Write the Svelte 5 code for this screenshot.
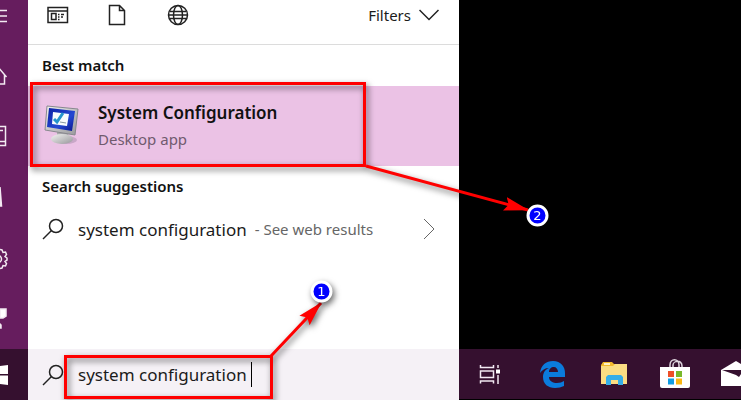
<script lang="ts">
  let query = 'system configuration';
</script>

<div class="screen">
  <nav class="rail" aria-label="Start menu">
    <button class="rail-item" aria-label="Expand">
      <svg viewBox="0 0 28 60"><path d="M0 26.5H7M0 32H7M0 37.5H7" /></svg>
    </button>
    <button class="rail-item" aria-label="Home">
      <svg viewBox="0 0 28 60"><path d="M-2 22L6.5 32M4.5 30V39H0" /></svg>
    </button>
    <button class="rail-item" aria-label="Apps">
      <svg viewBox="0 0 28 60"><path d="M0 20.5H5.5V39.5H0M0 35.5H5M0 24.5H3" /></svg>
    </button>
    <button class="rail-item" aria-label="Documents">
      <svg viewBox="0 0 28 60"><path d="M0 20V39H1.5L0 20M0 36H2" /></svg>
    </button>
    <button class="rail-item" aria-label="Settings">
      <svg viewBox="0 0 28 60">
        <circle cx="-2" cy="31" r="3.5" />
        <path d="M0 21.5L2 22L3 24.5L5.5 24L6.5 26.5L5 28.5L7 30V32L5 33.5L6.5 35.5L5.5 38L3 37.5L2 40L0 40.5" />
      </svg>
    </button>
    <button class="rail-item" aria-label="Feedback">
      <svg viewBox="0 0 28 60"><path class="solid" d="M0 20H6V27L3 29H0ZM0 35L1 36V39H0Z" /></svg>
    </button>
  </nav>

  <main class="panel">
    <header class="toolbar">
      <button class="tool" aria-label="Apps">
        <svg width="22" height="22" viewBox="0 0 22 22">
          <path d="M1 3.5H20.5V18.5H1ZM1 7H20.5M4.5 9.5H9V15.5H4.5ZM11 10.5H12.5M14 10.5H17M11 13H12.5M14 13H16M11 15.5H12.5" />
        </svg>
      </button>
      <button class="tool" aria-label="Documents">
        <svg width="22" height="22" viewBox="0 0 22 22">
          <path d="M2.5 1.5H12.5L17.5 6.5V20.5H2.5ZM12.5 1.5V6.5H17.5" />
        </svg>
      </button>
      <button class="tool" aria-label="Web">
        <svg width="22" height="22" viewBox="0 0 22 22">
          <circle cx="11" cy="11" r="9.5" />
          <ellipse cx="11" cy="11" rx="4.5" ry="9.5" />
          <path d="M1.5 11H20.5M3 7.5H19M3 14.5H19" />
        </svg>
      </button>
      <button class="filters">
        Filters
        <svg width="20" height="12" viewBox="0 0 20 12"><path d="M0.5 1L10 10.5L19.5 1" /></svg>
      </button>
    </header>

    <h2 class="heading">Best match</h2>
    <button class="result">
      <svg class="app-icon" width="38" height="42" viewBox="0 0 38 42">
        <defs>
          <linearGradient id="glass" x1="0" x2="1" y1="0" y2="1">
            <stop offset="0" stop-color="#0c1fa5" />
            <stop offset="0.6" stop-color="#2448d2" />
            <stop offset="1" stop-color="#08138c" />
          </linearGradient>
          <linearGradient id="metal" x1="0" x2="1" y1="0" y2="1">
            <stop offset="0" stop-color="#f4f4f2" />
            <stop offset="1" stop-color="#96969a" />
          </linearGradient>
        </defs>
        <ellipse cx="22" cy="35" rx="11" ry="4" fill="#a68baa" opacity="0.5" />
        <path d="M13 26L24 28L25 34L13 32Z" fill="#a9a9ad" />
        <ellipse cx="18" cy="34" rx="11" ry="5" fill="url(#metal)" />
        <path d="M3 1L34 4L31 30L1 25Z" fill="url(#metal)" stroke="#88888e" />
        <path d="M5 3L31 6L28 26L3 22Z" fill="url(#glass)" />
        <path d="M9 7L25 9L23 21L8 19Z" fill="#f8fbfd" />
        <path d="M10 14L13 17L19 8" fill="none" stroke="#2494cc" stroke-width="3" />
        <path d="M16 17L22 18" stroke="#8898a0" />
      </svg>
      <span class="result-text">
        <strong>System Configuration</strong>
        <span class="kind">Desktop app</span>
      </span>
    </button>

    <h2 class="heading">Search suggestions</h2>
    <button class="suggestion">
      <svg class="lens" width="22" height="22" viewBox="0 0 22 22">
        <circle cx="14" cy="8" r="6.5" /><path d="M9.5 12.5L1 21" />
      </svg>
      <span class="term">system configuration</span>
      <span class="hint">- See web results</span>
      <svg class="next" width="12" height="22" viewBox="0 0 12 22"><path d="M1 1L11 11L1 21" /></svg>
    </button>
  </main>

  <section class="desktop" aria-label="Desktop"></section>

  <button class="start" aria-label="Start">
    <svg width="28" height="22" viewBox="0 0 28 22"><path d="M0 2L8 1V10H0ZM0 11.5H8V21L0 20Z" /></svg>
  </button>

  <label class="search">
    <svg class="lens" width="22" height="22" viewBox="0 0 22 22">
      <circle cx="14" cy="8" r="6.5" /><path d="M9.5 12.5L1 21" />
    </svg>
    <input type="text" aria-label="Search" bind:value={query} />
  </label>

  <nav class="taskbar" aria-label="Taskbar">
    <button class="task task-view" aria-label="Task View">
      <svg width="22" height="22" viewBox="0 0 22 22" fill="none" stroke="#f2e9f2" stroke-width="1.5">
        <path d="M1.5 2V4.5H14.5V2M1.5 8H14.5V14.5H1.5ZM1.5 20.5V18H14.5V20.5M19 2V5M19 12V21" />
        <path d="M17 6.5H21V10.5H17Z" fill="#fff" stroke="none" />
      </svg>
    </button>
    <button class="task" aria-label="Microsoft Edge">
      <svg width="26" height="28" viewBox="0 0 26 28">
        <path fill="#0b7bdc" d="M0 13C1 5 6 1 13 1C21 1 25 7 25 13V17H9C9 21 13 23 17 23C20 23 22 22 24 21V26C21 27 19 28 15 28C8 28 3 24 3 17C3 12 6 9 9 8C5 8 2 10 0 13ZM9 12H18C18 9 16 7 14 7C11 7 9 9 9 12Z" />
      </svg>
    </button>
    <button class="task" aria-label="File Explorer">
      <svg width="28" height="26" viewBox="0 0 28 26">
        <path fill="#f4b92c" d="M1 4L3 1H12L14 3H27V7H1Z" />
        <path fill="#fff2c4" d="M4 2H10V4H4Z" />
        <path fill="#fbdd83" d="M1 5H13L15 3H27V23H1Z" />
        <path fill="#35aee8" d="M8 14H21L23 16V24H18V19H11V24H6V16Z" />
      </svg>
    </button>
    <button class="task" aria-label="Microsoft Store">
      <svg width="30" height="32" viewBox="0 0 30 32">
        <path d="M10 11V7C10 0 19 0 19 7V11M13 11V7C13 3 22 1 22 8V11" fill="none" stroke="#ded5de" stroke-width="1.5" />
        <path d="M0 9H30V28Q30 30 28 30H2Q0 30 0 28Z" fill="#fff" />
        <path fill="#ee4f28" d="M8 13H14V19H8Z" />
        <path fill="#78b82a" d="M16 13H22V19H16Z" />
        <path fill="#109de4" d="M8 20.5H14V26.5H8Z" />
        <path fill="#fbb713" d="M16 20.5H22V26.5H16Z" />
      </svg>
    </button>
    <button class="task" aria-label="Mail">
      <svg width="30" height="26" viewBox="0 0 30 26">
        <path fill="#fff" d="M0 9L15 0L30 9V25H0Z" />
        <path fill="#35102f" d="M1 9H29L20 13L18 16L15 14Z" />
      </svg>
    </button>
  </nav>

  <!-- Step markers drawn over the desktop -->
  <svg class="steps" width="741" height="400" viewBox="0 0 741 400" aria-hidden="true">
    <defs>
      <marker id="head" markerUnits="userSpaceOnUse" markerWidth="26" markerHeight="16" refX="24" refY="8" orient="auto">
        <path d="M0 1L25 8L0 15L4 8Z" fill="#f00" />
      </marker>
    </defs>
    <g class="shadow" fill="none" stroke="#f00" stroke-width="3">
      <rect x="31.5" y="83.5" width="333" height="82" />
      <rect x="65.5" y="356.5" width="206" height="41" />
      <path d="M366 166L528 210" marker-end="url(#head)" />
      <path d="M271 356L321 303" marker-end="url(#head)" />
    </g>
    <g class="badge shadow">
      <circle cx="321.5" cy="291.5" r="9.5" />
      <text x="321.5" y="296">1</text>
    </g>
    <g class="badge shadow">
      <circle cx="537.5" cy="215.5" r="9.5" />
      <text x="537.5" y="220">2</text>
    </g>
  </svg>
</div>

<style>
  :global(body) {
    margin: 0;
    background: #000;
  }

  .screen {
    position: relative;
    display: grid;
    grid-template-columns: 28px minmax(0, 431px) minmax(0, 1fr);
    grid-template-rows: 1fr 51px;
    min-height: 100vh;
    overflow: hidden;
    font-family: 'Noto Sans', 'Open Sans', sans-serif;
    color: #1b1b1b;
  }

  button {
    margin: 0;
    padding: 0;
    border: 0;
    background: none;
    color: inherit;
    font: inherit;
    text-align: left;
  }

  svg {
    display: block;
    flex: none;
  }

  .rail {
    display: flex;
    flex-direction: column;
    justify-content: flex-end;
    height: 100%;
    max-height: 349px;
    overflow: hidden;
    background: #661d5e;
  }

  .rail-item {
    flex: none;
    height: 61px;
  }

  .rail-item svg {
    width: 28px;
    height: 60px;
    fill: none;
    stroke: #f3eaf2;
    stroke-width: 1.5;
  }

  .rail-item .solid {
    fill: #fff;
  }

  .panel {
    background: #fff;
  }

  .toolbar {
    display: flex;
    align-items: flex-start;
    gap: 38px;
    box-sizing: border-box;
    height: 45px;
    padding: 4px 20px 0 19px;
    border-bottom: 1px solid #dcdcdc;
  }

  .toolbar svg {
    fill: none;
    stroke: #222;
    stroke-width: 1.5;
  }

  .filters {
    display: flex;
    align-items: center;
    gap: 8px;
    margin-left: auto;
    font-size: 15px;
    line-height: 22px;
  }

  .heading {
    margin: 0;
    padding: 0 14px;
    font-size: 15px;
    font-weight: 600;
    line-height: 41px;
    color: #111;
  }

  .result {
    display: flex;
    align-items: center;
    gap: 16px;
    width: 100%;
    height: 80px;
    padding: 0 16px;
    background: #ebc2e5;
  }

  .result-text {
    display: flex;
    flex-direction: column;
  }

  strong {
    font-size: 17px;
    font-weight: 600;
    line-height: 26px;
    color: #111;
  }

  .kind {
    font-size: 15px;
    line-height: 26px;
    color: #705a6e;
  }

  .suggestion {
    display: flex;
    align-items: center;
    width: 100%;
    height: 44px;
    padding: 0 24px 0 14px;
  }

  .lens {
    margin-right: 14px;
    fill: none;
    stroke: #222;
    stroke-width: 1.5;
  }

  .term {
    font-size: 17px;
  }

  .hint {
    margin-left: 8px;
    font-size: 15px;
    color: #666;
  }

  .next {
    margin-left: auto;
    fill: none;
    stroke: #666;
  }

  .start {
    background: #35102f;
  }

  .start svg {
    fill: #fff;
  }

  .search {
    display: flex;
    align-items: center;
    padding: 0 14px;
    background: #f5f1f6;
  }

  .search input {
    field-sizing: content;
    height: 25px;
    min-width: 0;
    padding: 0 4px 0 0;
    border: 0;
    border-right: 1px solid #000;
    outline: 0;
    background: none;
    color: #1b1b1b;
    font: inherit;
    font-size: 17px;
  }

  .taskbar {
    display: flex;
    overflow: hidden;
    border-bottom: 1px solid #000;
    background: #35102f;
  }

  .task {
    display: flex;
    flex: none;
    align-items: center;
    justify-content: center;
    width: 61px;
  }

  .task-view {
    margin-right: 2px;
  }

  .steps {
    position: absolute;
    top: 0;
    left: 0;
    pointer-events: none;
  }

  .shadow {
    filter: drop-shadow(2px 3px 3px rgba(0, 0, 0, 0.6));
  }

  .badge circle {
    fill: #00f;
    stroke: #fff;
    stroke-width: 3;
  }

  .badge text {
    fill: #fff;
    font-family: 'DejaVu Sans', sans-serif;
    font-size: 13px;
    text-anchor: middle;
  }

  .desktop {
    background: #000;
  }
</style>
